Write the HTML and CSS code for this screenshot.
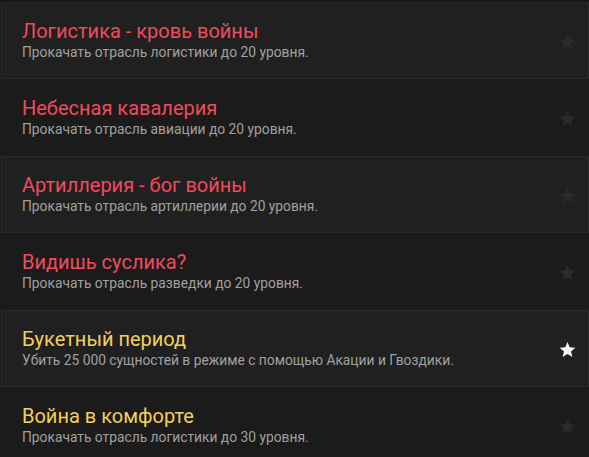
FILE: index.html
```html
<!DOCTYPE html>
<html lang="ru">
<head>
<meta charset="utf-8">
<title>Достижения</title>
<link rel="stylesheet" href="styles.css">
</head>
<body>
<ul class="achievements">
  <li class="achievement achievement--odd">
    <div class="achievement__text">
      <div class="achievement__title achievement__title--red">Логистика - кровь войны</div>
      <div class="achievement__desc">Прокачать отрасль логистики до 20 уровня.</div>
    </div>
    <svg class="star" viewBox="0 0 24 24"><path d="M12 1.5l3.1 7.4 8 .6-6.1 5.2 1.9 7.8L12 18.3l-6.9 4.2 1.9-7.8L.9 9.5l8-.6z"/></svg>
  </li>
  <li class="achievement">
    <div class="achievement__text">
      <div class="achievement__title achievement__title--red">Небесная кавалерия</div>
      <div class="achievement__desc">Прокачать отрасль авиации до 20 уровня.</div>
    </div>
    <svg class="star" viewBox="0 0 24 24"><path d="M12 1.5l3.1 7.4 8 .6-6.1 5.2 1.9 7.8L12 18.3l-6.9 4.2 1.9-7.8L.9 9.5l8-.6z"/></svg>
  </li>
  <li class="achievement achievement--odd">
    <div class="achievement__text">
      <div class="achievement__title achievement__title--red">Артиллерия - бог войны</div>
      <div class="achievement__desc">Прокачать отрасль артиллерии до 20 уровня.</div>
    </div>
    <svg class="star" viewBox="0 0 24 24"><path d="M12 1.5l3.1 7.4 8 .6-6.1 5.2 1.9 7.8L12 18.3l-6.9 4.2 1.9-7.8L.9 9.5l8-.6z"/></svg>
  </li>
  <li class="achievement">
    <div class="achievement__text">
      <div class="achievement__title achievement__title--red">Видишь суслика?</div>
      <div class="achievement__desc">Прокачать отрасль разведки до 20 уровня.</div>
    </div>
    <svg class="star" viewBox="0 0 24 24"><path d="M12 1.5l3.1 7.4 8 .6-6.1 5.2 1.9 7.8L12 18.3l-6.9 4.2 1.9-7.8L.9 9.5l8-.6z"/></svg>
  </li>
  <li class="achievement achievement--odd">
    <div class="achievement__text">
      <div class="achievement__title achievement__title--gold">Букетный период</div>
      <div class="achievement__desc">Убить 25 000 сущностей в режиме с помощью Акации и Гвоздики.</div>
    </div>
    <svg class="star star--earned" viewBox="0 0 24 24"><path d="M12 1.5l3.1 7.4 8 .6-6.1 5.2 1.9 7.8L12 18.3l-6.9 4.2 1.9-7.8L.9 9.5l8-.6z"/></svg>
  </li>
  <li class="achievement">
    <div class="achievement__text">
      <div class="achievement__title achievement__title--gold">Война в комфорте</div>
      <div class="achievement__desc">Прокачать отрасль логистики до 30 уровня.</div>
    </div>
    <svg class="star" viewBox="0 0 24 24"><path d="M12 1.5l3.1 7.4 8 .6-6.1 5.2 1.9 7.8L12 18.3l-6.9 4.2 1.9-7.8L.9 9.5l8-.6z"/></svg>
  </li>
</ul>
</body>
</html>
```
FILE: styles.css
```css
html, body {
  margin: 0;
  padding: 0;
  background: #1b1b1b;
  height: 100%;
  overflow: hidden;
}

body {
  font-family: Roboto, "Liberation Sans", sans-serif;
  border-top: 2px solid #151515;
}

.achievements {
  list-style: none;
  margin: 0;
  padding: 0 0 0 1px;
}

.achievement {
  display: flex;
  align-items: center;
  height: 77px;
  box-sizing: border-box;
  padding: 0 12px 0 20px;
  border: 1px solid transparent;
}

.achievement--odd {
  background: #202020;
  border-color: #2a2a2a;
}

.achievement__text {
  flex: 1;
  padding-bottom: 2px;
}

.achievement__title {
  font-size: 20px;
  line-height: 24px;
}

.achievement__title--red {
  color: #ef4b5c;
}

.achievement__title--gold {
  color: #f2d05c;
}

.achievement__desc {
  font-size: 13.8px;
  line-height: 18px;
  color: #a0a0a0;
}

.star {
  width: 17px;
  height: 17px;
  fill: #2b2b2b;
  margin-top: 2px;
}

.star--earned {
  fill: #f4f4f4;
}
```
